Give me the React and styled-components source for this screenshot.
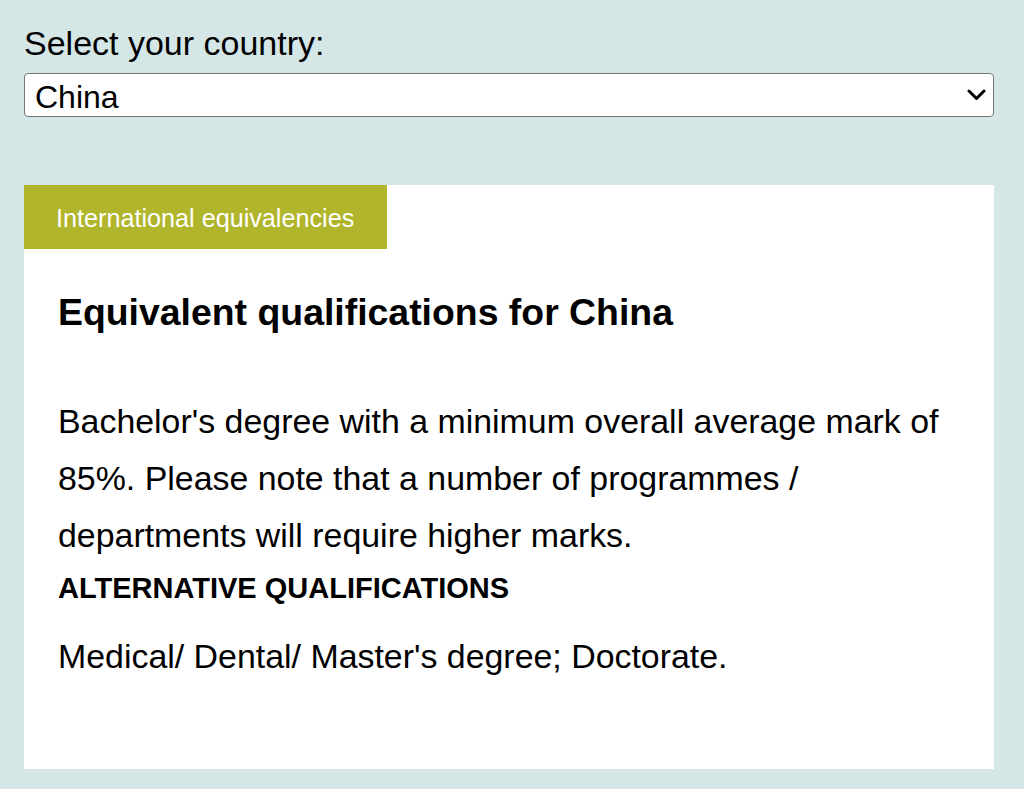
import styled, { createGlobalStyle } from "styled-components";

const GlobalStyle = createGlobalStyle`
html, body {
margin: 0;
padding: 0;
background: #d4e6e6;
}
body {
font-family: "Liberation Sans", Arial, Helvetica, sans-serif;
color: #000;
}
`;

const Page = styled.main`
padding: 23px 0 20px 24px;
width: 970px;
`;

const Label = styled.label`
display: block;
font-size: 34px;
line-height: 40px;
margin-bottom: 10px;
`;

const SelectWrap = styled.div`
position: relative;
width: 100%;
height: 44px;
`;

const Select = styled.select`
appearance: none;
-webkit-appearance: none;
box-sizing: border-box;
width: 100%;
height: 44px;
margin: 0;
padding: 3px 40px 0 10px;
font-family: "Liberation Sans", Arial, sans-serif;
font-size: 32px;
color: #000;
background: #fff;
border: 1px solid #767676;
border-radius: 4px;
outline: none;
`;

const Chevron = styled.svg`
position: absolute;
right: 8px;
top: 16px;
width: 19px;
height: 12px;
pointer-events: none;
`;

const Card = styled.section`
margin-top: 68px;
background: #fff;
`;

const Tab = styled.div`
display: inline-block;
padding: 2px 33px 0 32px;
line-height: 62px;
font-size: 25.2px;
color: #fff;
background: #b0b52c;
`;

const Body = styled.div`
padding: 41px 34px 84px;
`;

const Heading = styled.h2`
margin: 0 0 59px;
font-size: 37.4px;
line-height: 44px;
font-weight: 700;
`;

const Text = styled.p`
margin: 0;
font-size: 33.9px;
line-height: 57px;
`;

const SubHeading = styled.h3`
margin: 7px 0 23px;
font-size: 29px;
line-height: 34px;
font-weight: 700;
text-transform: uppercase;
`;

const App = () => {
    return (
    <>
        <GlobalStyle />
        <Page>
            <Label htmlFor="country">Select your country:</Label>
            <SelectWrap>
                <Select id="country" defaultValue="China">
                    <option>China</option>
                </Select>
                <Chevron viewBox="0 0 19 12">
                    <path d="M2 2 L9.5 9.5 L17 2" fill="none" stroke="#000" strokeWidth="3" strokeLinecap="round" strokeLinejoin="round" />
                </Chevron>
            </SelectWrap>

            <Card>
                <Tab>International equivalencies</Tab>
                <Body>
                    <Heading>Equivalent qualifications for China</Heading>
                    <Text>Bachelor's degree with a minimum overall average mark of 85%. Please note that a number of programmes{"\u00a0"}/ departments will require higher marks.</Text>
                    <SubHeading>Alternative qualifications</SubHeading>
                    <Text>Medical/ Dental/ Master's degree; Doctorate.</Text>
                </Body>
            </Card>
        </Page>
    </>
    );
}

export default App
